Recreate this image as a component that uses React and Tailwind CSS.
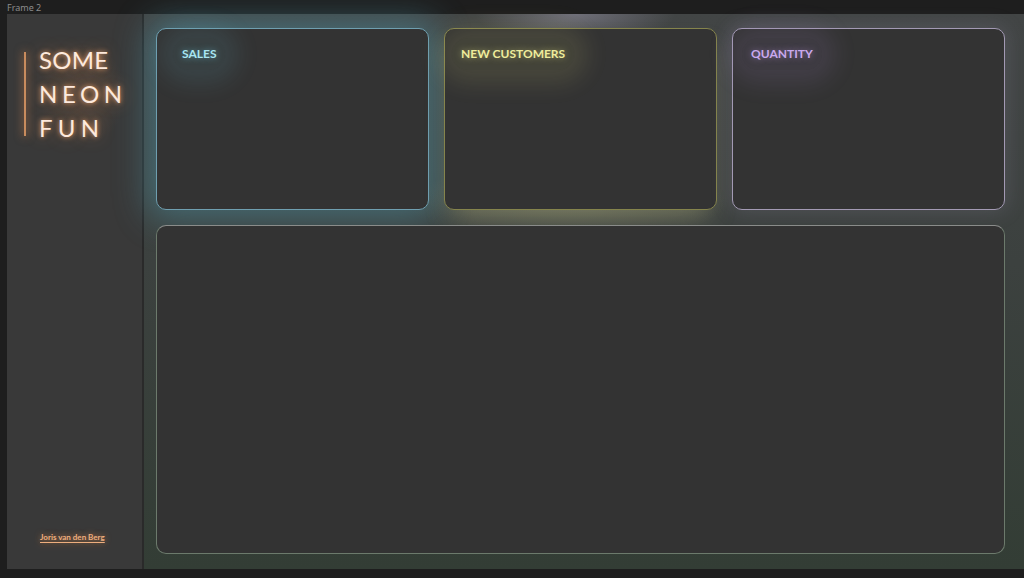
const cards = [
  {
    titulo: "SALES",
    pad: "pl-[16px]",
    text: "text-[#a9e6f2]",
    glow: "[text-shadow:0_0_6px_rgba(120,220,240,0.6)]",
    halo: "shadow-[0_0_22px_14px_rgba(110,190,210,0.12)] bg-[rgba(110,190,210,0.10)]",
    card: "border-[#6f9fb0] shadow-[0_0_34px_8px_rgba(80,160,180,0.45)]",
  },
  {
    titulo: "NEW CUSTOMERS",
    pad: "pl-[7px]",
    text: "text-[#eeec9c]",
    glow: "[text-shadow:0_0_6px_rgba(240,235,140,0.55)]",
    halo: "shadow-[0_0_22px_14px_rgba(220,215,120,0.12)] bg-[rgba(220,215,120,0.10)]",
    card: "border-[#85844c] shadow-[0_14px_26px_-8px_rgba(200,200,140,0.35)]",
  },
  {
    titulo: "QUANTITY",
    pad: "pl-[9px]",
    text: "text-[#c9a9ee]",
    glow: "[text-shadow:0_0_6px_rgba(200,160,240,0.55)]",
    halo: "shadow-[0_0_22px_14px_rgba(170,140,210,0.13)] bg-[rgba(170,140,210,0.10)]",
    card: "border-[#a39ab4] shadow-[0_0_20px_2px_rgba(160,150,180,0.2)]",
  },
];

const App = () => {
  return (
    <div className="w-[1024px] h-[578px] overflow-hidden bg-[#1e1e1e] flex flex-col font-['Lato',sans-serif]">
      {/* Barra superior */}
      <div className="h-[14px] pl-[7px] flex items-center">
        <span className="text-[9px] leading-none text-[#8c8c8c] font-['Noto_Sans',sans-serif]">Frame 2</span>
      </div>

      {/* Frame */}
      <div className="ml-[7px] h-[555px] flex">
        {/* Sidebar */}
        <aside className="w-[137px] h-full bg-[#393939] border-r-2 border-[#2a2a2a] flex flex-col justify-between">
          <div className="flex pt-[29px] pl-[17px]">
            <div className="w-[2px] my-[9px] bg-[#c98c5e] shadow-[0_0_8px_1px_rgba(230,140,80,0.5)]" />
            <div className="ml-[13px] text-[24px] leading-[34px] text-[#fde9dc] [text-shadow:0_0_5px_rgba(255,170,110,0.9),0_0_18px_rgba(255,150,80,0.45)] bg-[radial-gradient(ellipse_at_center,rgba(230,150,90,0.14),transparent_70%)]">
              <div className="tracking-[0.01em]">SOME</div>
              <div className="tracking-[0.19em]">NEON</div>
              <div className="tracking-[0.22em]">FUN</div>
            </div>
          </div>

          <div className="pl-[33px] pb-[23px]">
            <span className="text-[8px] font-bold text-[#eeae7e] underline underline-offset-2 decoration-[#eeae7e] [text-shadow:0_0_6px_rgba(240,150,80,0.7)]">
              Joris van den Berg
            </span>
          </div>
        </aside>

        {/* Contenido principal */}
        <main className="flex-1 h-full pl-[12px] pr-[19px] pt-[14px] pb-[15px] flex flex-col gap-[15px] bg-[radial-gradient(ellipse_100px_30px_at_49%_0%,rgba(180,175,200,0.4),transparent),radial-gradient(ellipse_160px_40px_at_48%_34%,rgba(190,190,140,0.22),transparent),linear-gradient(180deg,#424545_0%,#3c413f_45%,#333d35_100%)]">
          <div className="grid grid-cols-3 gap-[15px] h-[182px]">
            {cards.map((card) => (
              <div
                key={card.titulo}
                className={`rounded-[10px] border bg-[#333333] pt-[9px] ${card.pad} ${card.card}`}
              >
                <span
                  className={`inline-block px-[9px] py-[7px] rounded-full text-[12px] leading-[18px] font-bold ${card.text} ${card.glow} ${card.halo}`}
                >
                  {card.titulo}
                </span>
              </div>
            ))}
          </div>

          <div className="flex-1 rounded-[10px] border border-[#6c7a6c] border-t-[#8a8c8a] bg-[#333333]" />
        </main>
      </div>
    </div>
  );
};

export default App;
